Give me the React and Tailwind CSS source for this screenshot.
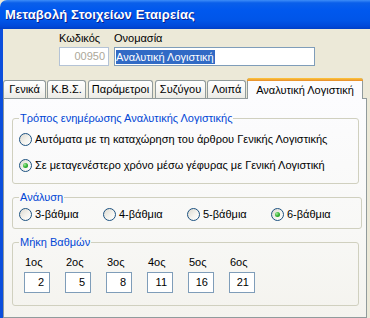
import React from 'react';

const font = { fontFamily: '"Liberation Sans", Arial, sans-serif' };

function Radio({ checked, label }) {
  return (
    <div className="flex items-center h-[13px] gap-[3px]">
      <span className="w-[13px] h-[13px] rounded-full border border-[#1C5180] bg-[linear-gradient(135deg,#DCD9D0_0%,#F4F3EE_55%,#FFFFFF_100%)] flex items-center justify-center shrink-0">
        {checked && (
          <span className="w-[5px] h-[5px] rounded-full bg-[radial-gradient(circle_at_35%_35%,#A8E8A0_0%,#33B332_50%,#168616_100%)]" />
        )}
      </span>
      <span className="leading-[13px] text-black whitespace-nowrap">{label}</span>
    </div>
  );
}

function Group({ title, className, children }) {
  return (
    <fieldset className={'mx-[8px] mr-[7px] border border-[#D0D0BF] rounded-[3px] px-[6px] ' + className}>
      <legend className="px-[1px] text-[#0046D5] leading-[13px]">{title}</legend>
      {children}
    </fieldset>
  );
}

const tabs = [
  { label: 'Γενικά', w: 'w-[43px]', ml: 'ml-0' },
  { label: 'Κ.Β.Σ.', w: 'w-[39px]', ml: 'ml-[1px]' },
  { label: 'Παράμετροι', w: 'w-[65px]', ml: 'ml-[2px]' },
  { label: 'Συζύγου', w: 'w-[51px]', ml: 'ml-[2px]' },
  { label: 'Λοιπά', w: 'w-[39px]', ml: 'ml-[1px]' },
];

const grades = [
  ['1ος', '2'],
  ['2ος', '5'],
  ['3ος', '8'],
  ['4ος', '11'],
  ['5ος', '16'],
  ['6ος', '21'],
];

export default function App() {
  return (
    <div className="w-[370px] h-[318px] overflow-hidden bg-[#ECE9D8] flex flex-col text-[11px]" style={font}>
      {/* title bar */}
      <div className="h-[29px] shrink-0 rounded-tl-[7px] bg-[linear-gradient(to_bottom,#3D8DF8_0%,#0A5FEA_10%,#0058EE_35%,#0055E8_70%,#0049DA_90%,#003FC6_100%)] flex items-center pl-[5px]">
        <span className="text-white font-bold text-[13px] [text-shadow:1px_1px_0_#0A1E8C] tracking-[0.1px]">
          Μεταβολή Στοιχείων Εταιρείας
        </span>
      </div>

      <div className="flex-1 border-l-[3px] border-[#0B4EDC] flex flex-col">
        {/* header fields */}
        <div className="pl-[56px] pt-[3px] grid grid-cols-[50px_201px] gap-x-[5px] gap-y-[2px]">
          <span className="leading-[13px] text-black">Κωδικός</span>
          <span className="leading-[13px] text-black">Ονομασία</span>
          <div className="h-[19px] border border-[#B4C3D6] bg-white text-[#ACA899] flex items-center justify-end pr-[3px]">00950</div>
          <div className="h-[19px] border border-[#7F9DB9] bg-white flex items-center pl-[1px]">
            <span className="bg-[#316AC5] text-white leading-[14px] pr-[1px]">Αναλυτική Λογιστική</span>
          </div>
        </div>

        {/* tabs */}
        <div className="mt-[12px] h-[20px] flex items-end relative z-10">
          {tabs.map((t) => (
            <div
              key={t.label}
              className={`${t.w} ${t.ml} h-[18px] border border-b-0 border-[#919B9C] rounded-t-[3px] bg-[linear-gradient(to_bottom,#FFFFFF_0%,#F7F7F4_50%,#ECEBE5_100%)] flex items-center justify-center text-black`}
            >
              {t.label}
            </div>
          ))}
          <div className="w-[116px] ml-[1px] h-[21px] -mb-[1px] border border-b-0 border-[#919B9C] rounded-t-[3px] bg-[#FCFCFE] flex flex-col">
            <div className="h-[3px] -mx-[1px] -mt-[1px] rounded-t-[3px] bg-[linear-gradient(to_bottom,#FFC83C,#E68B2C)]" />
            <div className="flex-1 flex items-center justify-center text-black">Αναλυτική Λογιστική</div>
          </div>
        </div>

        {/* panel */}
        <div className="w-[364px] flex-1 border border-[#919B9C] bg-[linear-gradient(to_bottom,#FCFCFE_0%,#F8F8F6_60%,#F4F3EE_100%)] flex flex-col">
          <Group title="Τρόπος ενημέρωσης Αναλυτικής Λογιστικής" className="mt-[13px] pt-[8px] pb-[11px]">
            <div className="flex flex-col gap-[13px]">
              <Radio label="Αυτόματα με τη καταχώρηση του άρθρου Γενικής Λογιστικής" />
              <Radio checked label="Σε μεταγενέστερο χρόνο μέσω γέφυρας με Γενική Λογιστική" />
            </div>
          </Group>

          <Group title="Ανάλυση" className="mt-[7px] pt-[4px] pb-[7px]">
            <div className="grid grid-cols-[84px_84px_84px_84px]">
              <Radio label="3-βάθμια" />
              <Radio label="4-βάθμια" />
              <Radio label="5-βάθμια" />
              <Radio checked label="6-βάθμια" />
            </div>
          </Group>

          <Group title="Μήκη Βαθμών" className="mt-[7px] pt-[7px] pb-[12px]">
            <div className="pl-[5px] grid grid-cols-[41px_41px_41px_41px_41px_41px]">
              {grades.map(([l, v]) => (
                <div key={l} className="flex flex-col gap-[3px]">
                  <span className="pl-[1px] leading-[13px] text-black">{l}</span>
                  <div className="w-[26px] h-[21px] border border-[#7F9DB9] bg-white flex items-center justify-end pr-[5px] text-black">
                    {v}
                  </div>
                </div>
              ))}
            </div>
          </Group>
        </div>
      </div>
    </div>
  );
}
